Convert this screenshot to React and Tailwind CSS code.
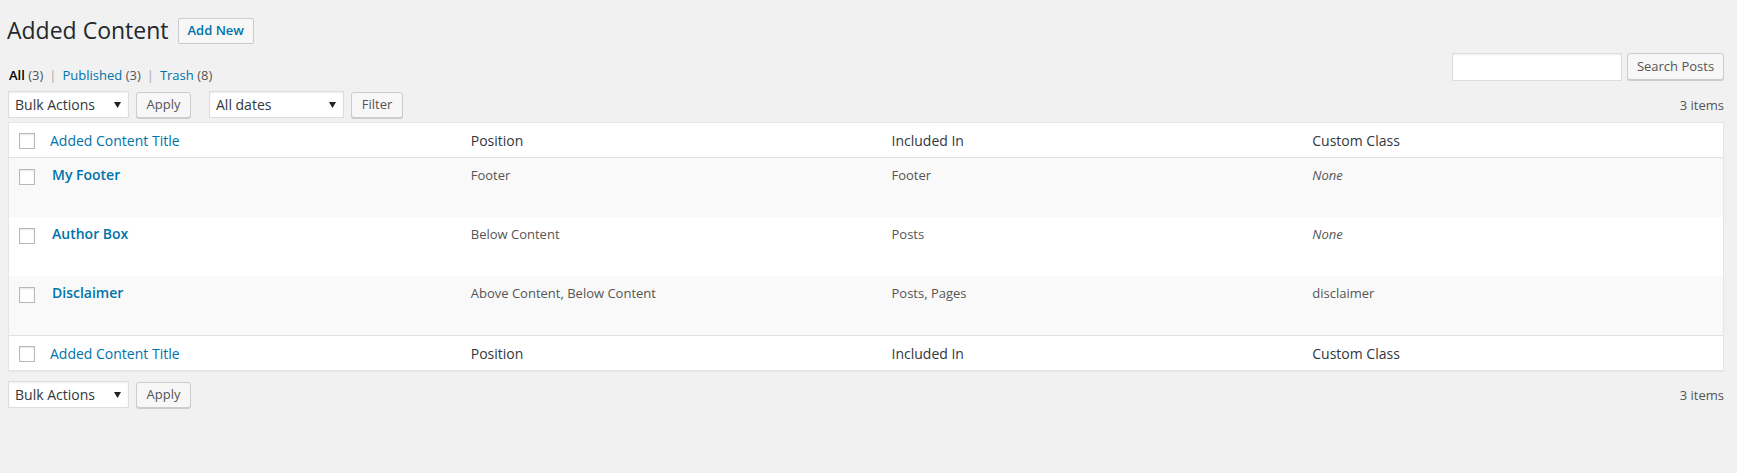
import React from "react";

function Arrow() {
  return (
    <svg width="7" height="6" viewBox="0 0 7 6" className="absolute right-[7px] top-[10px]">
      <polygon points="0,0 7,0 3.5,6" fill="#222" />
    </svg>
  );
}

function Select({ label, width }) {
  return (
    <div
      className={`relative flex h-[27px] items-center border border-[#ddd] bg-white pl-[6px] text-[14px] text-[#32373c] shadow-[inset_0_1px_2px_rgba(0,0,0,0.07)] ${width}`}
    >
      {label}
      <Arrow />
    </div>
  );
}

function Button({ children, width }) {
  return (
    <div
      className={`flex h-[26px] items-center justify-center rounded-[3px] border border-[#ccc] bg-[#f7f7f7] text-[13px] text-[#555] shadow-[0_1px_0_#ccc] ${width}`}
    >
      {children}
    </div>
  );
}

function Check() {
  return (
    <div className="h-[16px] w-[16px] border border-[#b4b9be] bg-white shadow-[inset_0_1px_2px_rgba(0,0,0,0.1)]" />
  );
}

const rows = [
  { title: "My Footer", pos: "Footer", inc: "Footer", cls: "None", none: true },
  { title: "Author Box", pos: "Below Content", inc: "Posts", cls: "None", none: true },
  { title: "Disclaimer", pos: "Above Content, Below Content", inc: "Posts, Pages", cls: "disclaimer", none: false },
];

function HeadRow({ border }) {
  return (
    <div
      className={`grid h-[35px] grid-cols-[31px_1fr_1fr_1fr_1fr] text-[14px] text-[#32373c] ${border}`}
    >
      <div className="pl-[10px] pt-[10px]">
        <Check />
      </div>
      <div className="pl-[10px] pt-[7px] text-[#0073aa]">Added Content Title</div>
      <div className="pl-[10px] pt-[7px]">Position</div>
      <div className="pl-[10px] pt-[7px]">Included In</div>
      <div className="pl-[10px] pt-[7px]">Custom Class</div>
    </div>
  );
}

export default function App() {
  return (
    <div className="min-h-screen bg-[#f1f1f1] pl-[8px] pr-[13px] pt-[15px] font-['Open_Sans',sans-serif] text-[13px] text-[#444]">
      <div className="-ml-[1px] flex h-[30px] items-center">
        <h1 className="text-[23px] font-normal leading-[30px] text-[#23282d]">Added Content</h1>
        <div className="ml-[9px] mt-[2px] flex h-[26px] items-center rounded-[2px] border border-[#ccc] bg-[#f7f7f7] px-[9px] text-[13px] font-semibold text-[#0073aa]">
          Add New
        </div>
      </div>

      <div className="mt-[8px] flex items-start justify-between">
        <div className="ml-[1px] mt-[12px] leading-[20px] text-[#555]">
          <span className="font-semibold text-black">All</span> <span>(3)</span>
          <span className="mx-[6px] text-[#aaa]">|</span>
          <span className="text-[#0073aa]">Published</span> <span>(3)</span>
          <span className="mx-[6px] text-[#aaa]">|</span>
          <span className="text-[#0073aa]">Trash</span> <span>(8)</span>
        </div>
        <div className="flex items-start gap-[5px]">
          <div className="h-[28px] w-[170px] border border-[#ddd] bg-white shadow-[inset_0_1px_2px_rgba(0,0,0,0.07)]" />
          <Button width="w-[97px] h-[27px]">Search Posts</Button>
        </div>
      </div>

      <div className="mt-[6px] flex h-[27px] items-center">
        <Select label="Bulk Actions" width="w-[121px]" />
        <div className="ml-[7px]">
          <Button width="w-[55px]">Apply</Button>
        </div>
        <div className="ml-[18px]">
          <Select label="All dates" width="w-[135px]" />
        </div>
        <div className="ml-[7px]">
          <Button width="w-[52px]">Filter</Button>
        </div>
        <div className="ml-auto mt-[3px] text-[#555]">3 items</div>
      </div>

      <div className="mt-[4px] border border-[#e5e5e5] bg-white shadow-[0_1px_1px_rgba(0,0,0,0.04)]">
        <HeadRow border="border-b border-[#e1e1e1]" />
        {rows.map((r, i) => (
          <div
            key={r.title}
            className={`grid h-[59px] grid-cols-[31px_1fr_1fr_1fr_1fr] text-[13px] text-[#555] ${i % 2 === 0 ? "bg-[#f9f9f9]" : "bg-white"}`}
          >
            <div className="pl-[10px] pt-[11px]">
              <Check />
            </div>
            <div className="pl-[12px] pt-[7px] text-[14px] font-semibold leading-[20px] text-[#0073aa]">{r.title}</div>
            <div className="pl-[10px] pt-[8px] leading-[19px]">{r.pos}</div>
            <div className="pl-[10px] pt-[8px] leading-[19px]">{r.inc}</div>
            <div className={`pl-[10px] pt-[8px] leading-[19px] ${r.none ? "italic" : ""}`}>{r.cls}</div>
          </div>
        ))}
        <HeadRow border="border-t border-[#e1e1e1]" />
      </div>

      <div className="mt-[10px] flex h-[27px] items-center">
        <Select label="Bulk Actions" width="w-[121px]" />
        <div className="ml-[7px]">
          <Button width="w-[55px]">Apply</Button>
        </div>
        <div className="ml-auto mt-[3px] text-[#555]">3 items</div>
      </div>
    </div>
  );
}
